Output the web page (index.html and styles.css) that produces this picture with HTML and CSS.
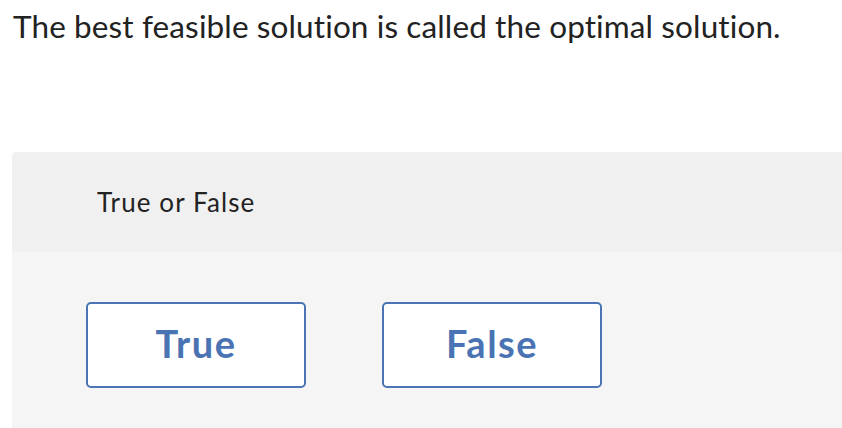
FILE: index.html
```html
<!DOCTYPE html>
<html>
<head>
<meta charset="utf-8">
<link rel="stylesheet" href="styles.css">
</head>
<body>
<p class="question">The best feasible solution is called the optimal solution.</p>
<div class="panel">
  <div class="panel-head">True or False</div>
  <div class="panel-body">
    <button class="choice">True</button>
    <button class="choice">False</button>
  </div>
</div>
</body>
</html>
```
FILE: styles.css
```css
html, body {
  margin: 0;
  padding: 0;
  background: #ffffff;
  font-family: "Lato", "Open Sans", sans-serif;
  color: #222222;
}
.question {
  margin: 0;
  padding: 7px 0 0 13px;
  height: 152px;
  box-sizing: border-box;
  font-size: 31.5px;
  letter-spacing: 0.12px;
  line-height: 38px;
}
.panel {
  margin-left: 12px;
  height: 276px;
  display: flex;
  flex-direction: column;
  border-top-left-radius: 4px;
  overflow: hidden;
}
.panel-head {
  height: 100px;
  flex: none;
  background: #f0f0f0;
  box-sizing: border-box;
  padding: 34px 0 0 85px;
  font-size: 26px;
  letter-spacing: 1.1px;
  line-height: 32px;
}
.panel-body {
  flex: 1;
  background: #f5f5f5;
  display: flex;
  align-items: flex-start;
  gap: 76px;
  padding: 50px 0 0 74px;
}
.choice {
  width: 220px;
  height: 86px;
  background: #ffffff;
  border: 2px solid #4a74b4;
  border-radius: 5px;
  font-family: "Lato", "Open Sans", sans-serif;
  font-weight: 700;
  font-size: 38px;
  letter-spacing: 1.5px;
  color: #4a73b3;
  padding: 0 0 5px 0;
}
```
